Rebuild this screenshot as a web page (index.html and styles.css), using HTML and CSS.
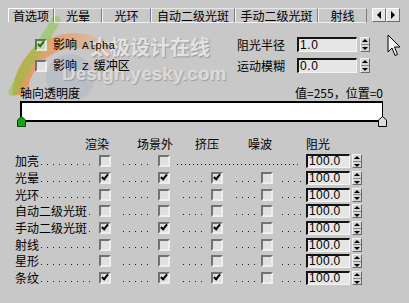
FILE: index.html
```html
<!DOCTYPE html>
<html lang="zh-CN">
<head>
    <meta charset="UTF-8">
    <title>镜头效果 - 首选项</title>
    <link rel="stylesheet" href="styles.css">
</head>
<body>
    <div class="panel">
        <!-- Watermark, sits behind the controls -->
        <div class="watermark">
            <svg class="wm-logo" width="140" height="100" viewBox="0 0 140 100">
                <defs>
                    <linearGradient id="arcfade" x1="0" y1="0" x2="1" y2="0">
                        <stop offset="0" stop-color="#e98a3c" stop-opacity="0.75"/>
                        <stop offset="0.6" stop-color="#ee9a55" stop-opacity="0.6"/>
                        <stop offset="1" stop-color="#f0b080" stop-opacity="0.15"/>
                    </linearGradient>
                </defs>
                <circle cx="70" cy="78" r="24" fill="#8fa3c4" opacity="0.25"/>
                <path d="M20 95 A55 55 0 0 1 112 55" fill="none" stroke="url(#arcfade)" stroke-width="15"/>
                <path d="M56 20 Q46 38 37 50 T13 92" fill="none" stroke="#86c83e" stroke-width="9" stroke-linecap="round" opacity="0.55"/>
            </svg>
            <span class="wm-cn">太极设计在线</span>
            <span class="wm-en">Design.yesky.com</span>
        </div>

        <!-- Tabs -->
        <div class="tabs">
            <div class="tab active t1">首选项</div>
            <div class="tab t2">光晕</div>
            <div class="tab t3">光环</div>
            <div class="tab t4">自动二级光斑</div>
            <div class="tab t5">手动二级光斑</div>
            <div class="tab t6">射线</div>
            <div class="tab-scroll">
                <span class="scroll-btn"><span class="tri-left"></span></span>
                <span class="scroll-btn"><span class="tri-right"></span></span>
            </div>
        </div>

        <!-- Options -->
        <div class="opts">
            <div class="opts-left">
                <div class="check-row"><span class="chk checked tinted"></span><span>影响<span class="lat">Alpha</span></span></div>
                <div class="check-row"><span class="chk"></span><span>影响<span class="lat">Z</span>缓冲区</span></div>
            </div>
            <div class="opts-right">
                <div class="field">
                    <span class="field-label">阻光半径</span>
                    <span class="num num-wide">1.0</span>
                    <span class="spin"><span class="up"></span><span class="down"></span></span>
                </div>
                <div class="field">
                    <span class="field-label">运动模糊</span>
                    <span class="num num-wide">0.0</span>
                    <span class="spin"><span class="up"></span><span class="down"></span></span>
                </div>
            </div>
        </div>

        <!-- Axial transparency -->
        <div class="axial">
            <div class="axial-head">
                <span>轴向透明度</span>
                <span>值=255，位置=0</span>
            </div>
            <div class="bar">
                <svg class="flag flag-start" width="9" height="11" viewBox="0 0 9 11">
                    <polygon points="0.5,4 4.5,0.5 8.5,4 8.5,10.5 0.5,10.5" fill="#16a31a" stroke="#0b3d0b"/>
                </svg>
                <svg class="flag flag-end" width="9" height="11" viewBox="0 0 9 11">
                    <polygon points="0.5,4 4.5,0.5 8.5,4 8.5,10.5 0.5,10.5" fill="#dcdcdc" stroke="#000"/>
                </svg>
            </div>
        </div>

        <!-- Effects table -->
        <div class="fx">
            <div class="fx-head">
                <span>渲染</span>
                <span class="h2">场景外</span>
                <span class="h3">挤压</span>
                <span class="h4">噪波</span>
                <span class="h5">阻光</span>
            </div>

            <div class="fx-row">
                <span class="fx-label"><span>加亮</span><span class="dots"></span></span>
                <span class="chk"></span>
                <span class="dots d1"></span>
                <span class="chk"></span>
                <span class="dots dlong"></span>
                <span class="num">100.0</span>
                <span class="spin"><span class="up"></span><span class="down"></span></span>
            </div>
            <div class="fx-row">
                <span class="fx-label"><span>光晕</span><span class="dots"></span></span>
                <span class="chk checked"></span>
                <span class="dots d1"></span>
                <span class="chk checked"></span>
                <span class="dots d2"></span>
                <span class="chk checked"></span>
                <span class="dots d3"></span>
                <span class="chk"></span>
                <span class="dots d4"></span>
                <span class="num">100.0</span>
                <span class="spin"><span class="up"></span><span class="down"></span></span>
            </div>
            <div class="fx-row">
                <span class="fx-label"><span>光环</span><span class="dots"></span></span>
                <span class="chk"></span>
                <span class="dots d1"></span>
                <span class="chk"></span>
                <span class="dots d2"></span>
                <span class="chk"></span>
                <span class="dots d3"></span>
                <span class="chk"></span>
                <span class="dots d4"></span>
                <span class="num">100.0</span>
                <span class="spin"><span class="up"></span><span class="down"></span></span>
            </div>
            <div class="fx-row">
                <span class="fx-label"><span>自动二级光斑</span><span class="dots"></span></span>
                <span class="chk"></span>
                <span class="dots d1"></span>
                <span class="chk"></span>
                <span class="dots d2"></span>
                <span class="chk"></span>
                <span class="dots d3"></span>
                <span class="chk"></span>
                <span class="dots d4"></span>
                <span class="num">100.0</span>
                <span class="spin"><span class="up"></span><span class="down"></span></span>
            </div>
            <div class="fx-row">
                <span class="fx-label"><span>手动二级光斑</span><span class="dots"></span></span>
                <span class="chk checked"></span>
                <span class="dots d1"></span>
                <span class="chk checked"></span>
                <span class="dots d2"></span>
                <span class="chk checked"></span>
                <span class="dots d3"></span>
                <span class="chk"></span>
                <span class="dots d4"></span>
                <span class="num">100.0</span>
                <span class="spin"><span class="up"></span><span class="down"></span></span>
            </div>
            <div class="fx-row">
                <span class="fx-label"><span>射线</span><span class="dots"></span></span>
                <span class="chk"></span>
                <span class="dots d1"></span>
                <span class="chk"></span>
                <span class="dots d2"></span>
                <span class="chk"></span>
                <span class="dots d3"></span>
                <span class="chk"></span>
                <span class="dots d4"></span>
                <span class="num">100.0</span>
                <span class="spin"><span class="up"></span><span class="down"></span></span>
            </div>
            <div class="fx-row">
                <span class="fx-label"><span>星形</span><span class="dots"></span></span>
                <span class="chk"></span>
                <span class="dots d1"></span>
                <span class="chk"></span>
                <span class="dots d2"></span>
                <span class="chk"></span>
                <span class="dots d3"></span>
                <span class="chk"></span>
                <span class="dots d4"></span>
                <span class="num">100.0</span>
                <span class="spin"><span class="up"></span><span class="down"></span></span>
            </div>
            <div class="fx-row">
                <span class="fx-label"><span>条纹</span><span class="dots"></span></span>
                <span class="chk checked"></span>
                <span class="dots d1"></span>
                <span class="chk checked"></span>
                <span class="dots d2"></span>
                <span class="chk checked"></span>
                <span class="dots d3"></span>
                <span class="chk"></span>
                <span class="dots d4"></span>
                <span class="num">100.0</span>
                <span class="spin"><span class="up"></span><span class="down"></span></span>
            </div>
        </div>

        <!-- Mouse pointer -->
        <svg class="pointer" width="14" height="23" viewBox="0 0 14 23">
            <path d="M1 1 L1 18 L5 14 L8 21.5 L10.5 20.5 L7.5 13 L13 13 Z" fill="#f2f2f2" stroke="#000" stroke-width="1" stroke-linejoin="miter"/>
        </svg>
    </div>
</body>
</html>
```

FILE: styles.css
```css
/* General */
body {
    margin: 0;
    background-color: #c8c8c8;
    font-family: "Noto Sans CJK SC", "Liberation Sans", sans-serif;
    font-size: 12px;
    line-height: 12px;
    color: #000;
}

.panel {
    position: relative;
    width: 409px;
    height: 303px;
    overflow: hidden;
}

/* controls stack above the watermark */
.tabs,
.opts,
.axial,
.fx {
    position: relative;
    z-index: 1;
}

/* Tabs */
.tabs {
    display: flex;
    margin-top: 8px;
    padding-left: 8px;
    height: 15px;
}

.tab {
    box-sizing: border-box;
    height: 15px;
    line-height: 13px;
    text-align: center;
    border-top: 1px solid #e6e6e6;
    border-left: 1px solid #f4f4f4;
    border-right: 1px solid #7c7c7c;
    border-bottom: 1px solid #eeeeee;
}

.tab.active {
    border-top-color: #ffffff;
    border-left-color: #ffffff;
    border-bottom-color: #c8c8c8;
}

.t1 { width: 46px; }
.t2 { width: 48px; }
.t3 { width: 49px; }
.t4 { width: 84px; }
.t5 { width: 83px; }
.t6 { width: 49px; }

.tab-scroll {
    display: flex;
    margin-left: 5px;
    height: 14px;
}

.scroll-btn {
    box-sizing: border-box;
    width: 14px;
    height: 14px;
    display: flex;
    align-items: center;
    justify-content: center;
    background: #e4e4e4;
    border: 1px solid;
    border-color: #ffffff #6c6c6c #6c6c6c #ffffff;
}

.tri-left {
    border-top: 4px solid transparent;
    border-bottom: 4px solid transparent;
    border-right: 4px solid #000;
}

.tri-right {
    border-top: 4px solid transparent;
    border-bottom: 4px solid transparent;
    border-left: 4px solid #000;
}

/* Options */
.opts {
    display: flex;
    margin-top: 14px;
}

.opts-left {
    box-sizing: border-box;
    width: 237px;
    padding-left: 35px;
    display: flex;
    flex-direction: column;
    gap: 6px;
}

.check-row {
    height: 15px;
    display: flex;
    align-items: center;
    gap: 6px;
}

.lat {
    font-family: "Liberation Mono", monospace;
    font-size: 11px;
    margin: 0 5px;
}

.opts-right {
    display: flex;
    flex-direction: column;
    gap: 6px;
}

.field {
    display: flex;
    align-items: center;
    height: 15px;
}

.field-label {
    width: 60px;
}

/* Checkbox */
.chk {
    position: relative;
    box-sizing: border-box;
    width: 12px;
    height: 12px;
    background: #e0e0e0;
    border: 2px solid;
    border-color: #727272 #eeeeee #eeeeee #727272;
}

.chk.checked::after {
    content: "";
    position: absolute;
    left: 2px;
    top: -1px;
    width: 2px;
    height: 5px;
    border: solid #000;
    border-width: 0 2px 2px 0;
    transform: rotate(40deg);
}

.chk.tinted {
    background: #c9d8b8;
    border-color: #5f7a4a #dfe8d4 #dfe8d4 #5f7a4a;
}

.chk.tinted::after {
    border-color: #2e6a14;
}

/* Number field */
.num {
    box-sizing: border-box;
    width: 44px;
    height: 14px;
    padding-left: 1px;
    background: #e6e6e6;
    border-style: solid;
    border-width: 2px 1px 1px 2px;
    border-color: #141414 #f4f4f4 #f4f4f4 #141414;
    font-family: "Liberation Sans", Arial, sans-serif;
    font-size: 12px;
    line-height: 11px;
    letter-spacing: 0.3px;
}

.num-wide {
    width: 60px;
    height: 15px;
    line-height: 12px;
    letter-spacing: 0.6px;
}

.spin {
    box-sizing: border-box;
    width: 10px;
    height: 14px;
    margin-left: 2px;
    display: flex;
    flex-direction: column;
    background: #d6d6d6;
    border: 1px solid;
    border-color: #f4f4f4 #6a6a6a #6a6a6a #f4f4f4;
}

.field .spin {
    margin-left: 3px;
    height: 15px;
}

.spin .up,
.spin .down {
    flex: 1;
    position: relative;
}

.spin .up {
    border-bottom: 1px solid #8a8a8a;
}

.spin .up::after,
.spin .down::after {
    content: "";
    position: absolute;
    left: 1px;
    border-left: 3px solid transparent;
    border-right: 3px solid transparent;
}

.spin .up::after {
    top: 1px;
    border-bottom: 3px solid #000;
}

.spin .down::after {
    top: 2px;
    border-top: 3px solid #000;
}

/* Axial transparency */
.axial {
    margin: 14px 26px 0 20px;
}

.axial-head {
    display: flex;
    justify-content: space-between;
    height: 12px;
}

.bar {
    position: relative;
    box-sizing: border-box;
    height: 21px;
    margin-top: 2px;
    background: #ffffff;
    border-style: solid;
    border-color: #000;
    border-width: 2px 1px 2px 2px;
}

.flag {
    position: absolute;
    bottom: -7px;
}

.flag-start { left: -5px; }
.flag-end { right: -5px; }

/* Effects table */
.fx {
    margin-top: 16px;
}

.fx-head {
    display: flex;
    height: 12px;
    padding-left: 85px;
}

.fx-head .h2 { margin-left: 28px; }
.fx-head .h3 { margin-left: 22px; }
.fx-head .h4 { margin-left: 29px; }
.fx-head .h5 { margin-left: 34px; }

.fx-head + .fx-row {
    margin-top: 3px;
}

.fx-row {
    display: grid;
    grid-template-columns: 84px 12px 47px 12px 41px 12px 38px 12px 33px 44px 12px;
    align-items: center;
    height: 16.7px;
    padding-left: 15px;
}

.fx-label {
    display: flex;
    align-items: center;
}

.dots {
    height: 1px;
    margin-top: 6px;
    background: linear-gradient(90deg, #1c1c1c 1px, transparent 1px) 0 0 / 6px 1px repeat-x;
}

.fx-label .dots {
    flex: 1;
    margin-left: 2px;
    margin-right: 4px;
}

.d1 { margin-left: 12px; margin-right: 8px; }
.d2 { margin-left: 13px; margin-right: 6px; }
.d3 { margin-left: 13px; margin-right: 4px; }
.d4 { margin-left: 9px; margin-right: 5px; }

.dlong {
    grid-column: span 5;
    margin-left: 7px;
    margin-right: 5px;
    background-size: 4px 1px;
}

/* Watermark */
.watermark {
    position: absolute;
    top: 0;
    left: 0;
    z-index: 0;
    width: 260px;
    height: 100px;
    pointer-events: none;
}

.wm-logo {
    position: absolute;
    top: 0;
    left: 0;
}

.wm-cn {
    position: absolute;
    left: 90px;
    top: 36px;
    font-size: 20px;
    line-height: 22px;
    font-weight: bold;
    color: rgba(238, 238, 238, 0.85);
    text-shadow: 1px 1px 1px rgba(110, 110, 110, 0.55);
    white-space: nowrap;
}

.wm-en {
    position: absolute;
    left: 62px;
    top: 64px;
    font-family: "Liberation Sans", Arial, sans-serif;
    font-size: 19px;
    line-height: 20px;
    font-weight: bold;
    color: rgba(225, 225, 225, 0.9);
    text-shadow: 1px 1px 1px rgba(120, 120, 120, 0.5);
    white-space: nowrap;
}

/* Pointer */
.pointer {
    position: absolute;
    left: 387px;
    top: 34px;
    z-index: 2;
}
```
